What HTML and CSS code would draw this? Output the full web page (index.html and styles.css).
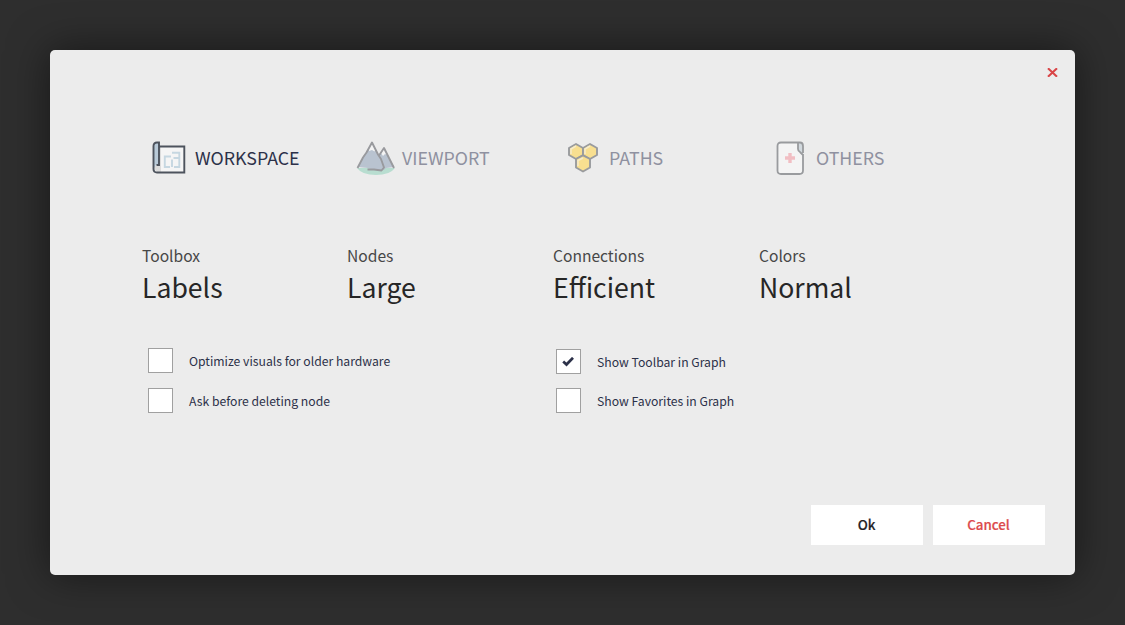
FILE: index.html
```html
<!DOCTYPE html>
<html lang="en">
<head>
<meta charset="utf-8">
<title>Settings</title>
<link rel="stylesheet" href="styles.css">
</head>
<body>
<main class="dialog">
  <header class="dialog-top">
    <button class="close" aria-label="Close"><svg width="11" height="9" viewBox="0 0 11 9"><path d="M1 .3 10 8.7M10 .3 1 8.7" fill="none" stroke="#d94446" stroke-width="2.1"/></svg></button>
  </header>
  <nav class="tabs">
    <a class="tab active">
      <svg class="icon workspace" width="34" height="34" viewBox="0 0 34 34">
        <path d="M7 5H32V31H5Q2 31 2 28V5Z" fill="#f5f5f5"/>
        <path d="M7 5V25H2V28L5 31H9V5Z" fill="#dcdcdc"/>
        <path d="M2 27V5Q2 2 5 2H7V24H4Z" fill="#b9cad8"/>
        <path d="M7 5.500H32.300V31.500H5Q1.500 31.500 1.500 28V5Q1.500 1.500 5 1.500H7V24H4.500" fill="none" stroke="#4d535d" stroke-width="1.900"/>
        <path d="M19 15.500H12.800V26H18M20 18.500V26M20 11.800H27.300V26H22M21.500 17H27" fill="none" stroke="#c6d7e1" stroke-width="1.900"/>
      </svg>
      <span>WORKSPACE</span>
    </a>
    <a class="tab">
      <svg class="icon viewport" width="40" height="36" viewBox="0 0 40 36">
        <path d="M1 28H39Q34 35 20 35 6 35 1 28Z" fill="#b8ddd0"/>
        <path d="M2 27 7 17 16 2 23 15 28 8 38 27 30 28 28 30H17L12 28Z" fill="#b9c3d0"/>
        <path d="M13 8 16 3 19.500 9 18.500 11.500 16 10 13 11ZM25 13 28 8.500 31.500 15 29 14 27 16Z" fill="#f4f4f4"/>
        <path d="M1.500 28 7 17.500 10.500 12.500 16 2.500 22 14.500 25 19 28 27.500 25.500 30.500 18 29.500H11.500M23 15.500 28 8 38 28" fill="none" stroke="#999a9e" stroke-width="1.900" stroke-linejoin="round"/>
      </svg>
      <span>VIEWPORT</span>
    </a>
    <a class="tab">
      <svg class="icon paths" width="32" height="32" viewBox="0 0 32 32">
        <g fill="#f8df90" stroke="#999b9e" stroke-width="1.900" stroke-linejoin="round">
          <path d="M9 2 16 6V13L9 17 2 13V6Z"/>
          <path d="M23 2 30 6V13L23 17 16 13V6Z"/>
          <path d="M16 13.500 23 17V25.500L16 29.500 9 25.500V17Z"/>
        </g>
        <path d="M4 12V7L9 4M18 12V7L23 4M11 24V18.500L16 16" fill="none" stroke="#f6eccb" stroke-width="1.500"/>
      </svg>
      <span>PATHS</span>
    </a>
    <a class="tab">
      <svg class="icon others" width="29" height="35" viewBox="0 0 29 35">
        <path d="M5 1.500H22L27 6.500V30Q27 32.500 23.500 32.500H5Q1.500 32.500 1.500 30V5Q1.500 1.500 5 1.500Z" fill="#f4f4f4"/>
        <path d="M22 2H24Q27 2 27 5V13L22 9Z" fill="#d2d9de"/>
        <path d="M27 13V29.500Q27 33 23.500 33H5Q1.500 33 1.500 29.500V5Q1.500 1.500 5 1.500H24Q27 1.500 27 5V12M22 2V8Q22 10 24 11L27 14" fill="none" stroke="#999b9e" stroke-width="1.800"/>
        <path d="M14 12V22M9 17H19" fill="none" stroke="#f1bec3" stroke-width="3.400"/>
      </svg>
      <span>OTHERS</span>
    </a>
  </nav>
  <section class="choices">
    <div class="choice"><div class="name">Toolbox</div><div class="value">Labels</div></div>
    <div class="choice"><div class="name">Nodes</div><div class="value">Large</div></div>
    <div class="choice"><div class="name">Connections</div><div class="value">Efficient</div></div>
    <div class="choice"><div class="name">Colors</div><div class="value">Normal</div></div>
  </section>
  <section class="options">
    <div class="column">
      <label class="option"><span class="box"></span><span>Optimize visuals for older hardware</span></label>
      <label class="option"><span class="box"></span><span>Ask before deleting node</span></label>
    </div>
    <div class="column shifted">
      <label class="option"><span class="box"><svg class="check" width="12" height="10" viewBox="0 0 12 10"><path d="M1.200 4.500 4.500 7.500 11 .8" fill="none" stroke="#2c3149" stroke-width="2.700"/></svg></span><span>Show Toolbar in Graph</span></label>
      <label class="option"><span class="box"></span><span>Show Favorites in Graph</span></label>
    </div>
  </section>
  <footer class="actions">
    <button class="action">Ok</button>
    <button class="action cancel">Cancel</button>
  </footer>
</main>
</body>
</html>
```
FILE: styles.css
```css
* { box-sizing: border-box; }
body {
  margin: 0;
  height: 625px;
  padding: 50px;
  overflow: hidden;
  background: #2e2e2e;
  font-family: "Noto Sans CJK SC", "Noto Sans", sans-serif;
}
.dialog {
  display: flex;
  flex-direction: column;
  width: 1025px;
  height: 525px;
  background: #ececec;
  border-radius: 5px;
  box-shadow: 0 0 40px rgba(0, 0, 0, .5);
}
button { border: 0; padding: 0; font-family: inherit; }
.dialog-top { display: flex; justify-content: flex-end; height: 88px; padding: 18px 17px 0; }
.close { display: flex; width: 11px; height: 9px; background: none; }
.tabs { display: grid; grid-template-columns: 207px 207px 207px 160px; height: 40px; padding-left: 102px; }
.tab { display: flex; align-items: center; font-size: 17.800px; line-height: 26px; color: #8f91a0; }
.tab span { padding-bottom: 2px; }
.tab.active { color: #2c3149; }
.icon { flex: none; }
.workspace { margin-right: 9px; }
.viewport { margin: 0 6px 0 -3px; }
.paths { margin: 0 10px 0 1px; }
.others { margin: 0 11px 0 3px; }
.choices { display: grid; grid-template-columns: 205px 206px 206px 206px; height: 80px; margin-top: 64px; padding-left: 92px; }
.name { font-size: 15.600px; line-height: 26px; color: #474747; }
.value { font-size: 26.600px; line-height: 38px; color: #262626; }
.options { display: grid; grid-template-columns: 408px 408px; height: 82px; margin-top: 25px; padding-left: 98px; }
.column { display: flex; flex-direction: column; gap: 15px; padding-top: 1px; }
.shifted { gap: 14px; padding-top: 2px; }
.option { display: flex; align-items: center; height: 25px; gap: 16px; font-size: 12.200px; color: #2c3149; }
.box { display: grid; place-items: center; width: 25px; height: 25px; background: #fff; border: 1px solid #a0a0a0; }
.check { margin-right: 1px; }
.actions { display: flex; justify-content: flex-end; gap: 10px; margin-top: auto; padding: 0 30px 30px; }
.action { width: 112px; height: 40px; padding: 0 1px 2px 0; background: #fff; color: #1f2124; font-size: 13.350px; font-weight: 500; -webkit-text-stroke: .2px currentColor; }
.action.cancel { color: #dc4a4c; }
```
